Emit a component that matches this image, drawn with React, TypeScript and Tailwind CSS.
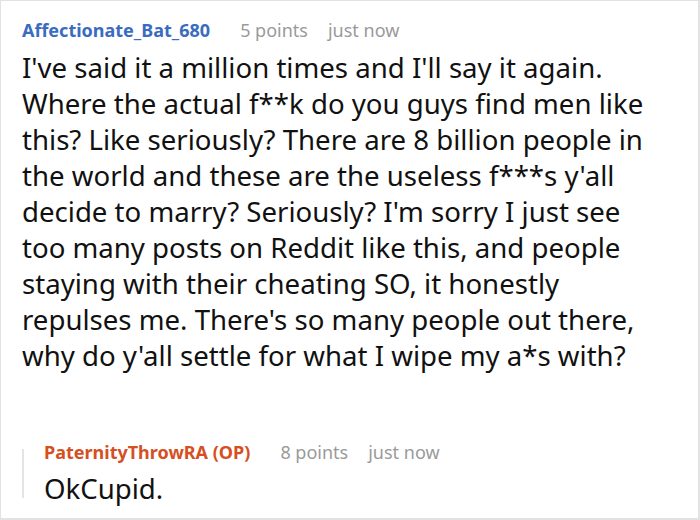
export default function App() {
  return (
    <div className="w-[700px] h-[520px] bg-white border border-[#e2e2e2] border-r-2 border-b-2 overflow-hidden font-['Noto_Sans',sans-serif]">
      {/* 댓글 */}
      <div className="pl-[21px] pr-[30px] pt-[15px]">
        <div className="flex items-baseline text-[18px] leading-[28px]">
          <span className="font-bold text-[#3a6cc0]">Affectionate_Bat_680</span>
          <span className="ml-[30px] text-[#9a9a9a]">5 points</span>
          <span className="ml-[20px] text-[#9a9a9a]">just now</span>
        </div>
        <p className="mt-[5px] text-[27.6px] leading-[36px] text-[#111]">
          I've said it a million times and I'll say it again. Where the actual f**k do you guys find men like this? Like seriously? There are 8 billion people in the world and these are the useless f***s y'all decide to marry? Seriously? I'm sorry I just see too many posts on Reddit like this, and people staying with their cheating SO, it honestly repulses me. There's so many people out there, why do y'all settle for what I wipe my a*s with?
        </p>
      </div>

      {/* 답글 */}
      <div className="ml-[21px] mt-[65px] flex">
        <div className="w-[2px] bg-[#e4e4e4] mt-[11px] mb-[8px]" />
        <div className="pl-[20px]">
          <div className="flex items-baseline text-[18px] leading-[28px]">
            <span className="font-bold text-[#d6501f]">PaternityThrowRA (OP)</span>
            <span className="ml-[30px] text-[#9a9a9a]">8 points</span>
            <span className="ml-[20px] text-[#9a9a9a]">just now</span>
          </div>
          <p className="mt-[4px] text-[27.6px] leading-[36px] text-[#111]">OkCupid.</p>
        </div>
      </div>
    </div>
  );
}
